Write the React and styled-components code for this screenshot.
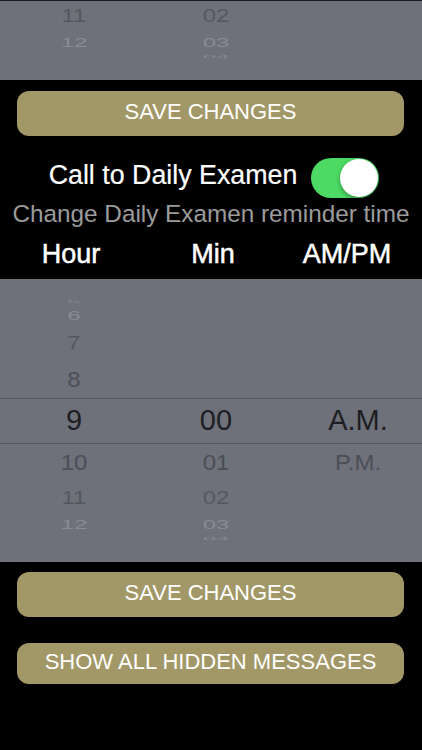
import React, { useState } from "react"
import styled, { createGlobalStyle } from "styled-components"

const GlobalStyle = createGlobalStyle`
  html, body {
    margin: 0;
    padding: 0;
    background: #000;
  }
  body {
    font-family: "Liberation Sans", Arial, sans-serif;
  }
`

// wheel geometry: radius and angle per row of the fake 3d drum
const RADIUS = 122
const STEP = (20 * Math.PI) / 180
const SLOTS = [-4, -3, -2, -1, 0, 1, 2, 3, 4]

const slotHeight = k => RADIUS * (Math.sin((k + 0.5) * STEP) - Math.sin((k - 0.5) * STEP))

const slotColor = k => {
  const d = Math.abs(k)
  if (d === 0) return "#1d1e23"
  if (d === 1) return "#4c4e56"
  if (d === 2) return "#55575f"
  if (d === 3) return "#8a8c94"
  return "#878991"
}

const Screen = styled.div`
  width: 422px;
  min-height: 750px;
  background: #000;
  display: flex;
  flex-direction: column;
  overflow: hidden;
`

const PickerClip = styled.div`
  height: 79px;
  border-top: 1px solid #1b1b1d;
  overflow: hidden;
  display: flex;
  flex-direction: column;
  justify-content: flex-end;
`

const Picker = styled.div`
  position: relative;
  flex-shrink: 0;
  height: 283px;
  background: #6e717a;
  display: grid;
  grid-template-columns: 142px 142px 142px;
  padding-left: 3px;
  overflow: hidden;
`

const SelectionBand = styled.div`
  position: absolute;
  left: 0;
  right: 0;
  top: 50%;
  height: 44px;
  transform: translateY(-50%);
  border-top: 1px solid #595b63;
  border-bottom: 1px solid #595b63;
  pointer-events: none;
`

const Wheel = styled.div`
  display: flex;
  flex-direction: column;
  justify-content: center;
  align-items: stretch;
`

const Slot = styled.div`
  display: flex;
  align-items: center;
  justify-content: center;
  overflow: visible;
  white-space: nowrap;
  line-height: 1;
  font-size: ${props => (props.selected ? "29px" : "24px")};
  color: ${props => props.tint};
`

const SlotText = styled.span`
  display: inline-block;
`

const GoldButton = styled.button`
  display: flex;
  align-items: center;
  justify-content: center;
  margin: ${props => props.gap}px 18px 0 17px;
  height: ${props => props.tall}px;
  border: 0;
  border-radius: 12px;
  background: #a29766;
  color: #fff;
  font-family: "Liberation Sans", Arial, sans-serif;
  font-size: 22px;
  padding: 0 0 3px;
  cursor: pointer;
`

const ToggleRow = styled.div`
  display: flex;
  align-items: center;
  justify-content: center;
  gap: 14px;
  margin-top: 22px;
  padding-left: 6px;
  height: 40px;
`

const ToggleLabel = styled.span`
  color: #fff;
  font-size: 26.8px;
  padding-bottom: 5px;
  -webkit-text-stroke: 0.2px #fff;
`

const Track = styled.button`
  width: 68px;
  height: 40px;
  border: 0;
  padding: 1px;
  border-radius: 20px;
  background: ${props => (props.on ? "#4cd964" : "#3a3a3c")};
  display: flex;
  justify-content: ${props => (props.on ? "flex-end" : "flex-start")};
  align-items: center;
  cursor: pointer;
`

const Knob = styled.span`
  width: 38px;
  height: 38px;
  border-radius: 50%;
  background: #fff;
  box-shadow: 0 2px 4px rgba(0, 0, 0, 0.35);
`

const Hint = styled.div`
  margin-top: 1px;
  text-align: center;
  color: #9b9b9b;
  font-size: 24.3px;
  line-height: 30px;
  white-space: nowrap;
`

const ColumnHeads = styled.div`
  display: grid;
  grid-template-columns: 142px 142px 126px;
  height: 50px;
  align-items: center;
`

const Head = styled.span`
  text-align: center;
  color: #fff;
  font-size: 27px;
  -webkit-text-stroke: 0.5px #fff;
`

const hours = [5, 6, 7, 8, 9, 10, 11, 12, null]
const minutes = [null, null, null, null, "00", "01", "02", "03", "04"]
const meridiem = [null, null, null, null, "A.M.", "P.M.", null, null, null]

// from: first slot whose text is drawn (rows above it are clipped away anyway)
const WheelColumn = ({ values, from }) => (
  <Wheel>
    {SLOTS.map((k, i) => {
      const value = k >= from ? values[i] : null
      return (
        <Slot key={k} selected={k === 0} tint={slotColor(k)} style={{ height: slotHeight(k) }}>
          {value !== null && (
            <SlotText style={{ transform: `scaleY(${Math.cos(k * STEP).toFixed(3)})` }}>{value}</SlotText>
          )}
        </Slot>
      )
    })}
  </Wheel>
)

const TimePicker = ({ from = -4 }) => (
  <Picker>
    <WheelColumn values={hours} from={from} />
    <WheelColumn values={minutes} from={from} />
    <WheelColumn values={meridiem} from={from} />
    <SelectionBand />
  </Picker>
)

const App = () => {
  const [enabled, setEnabled] = useState(true)

  return (
    <Screen>
      <GlobalStyle />
      <PickerClip>
        <TimePicker from={2} />
      </PickerClip>
      <GoldButton gap={11} tall={45}>SAVE CHANGES</GoldButton>
      <ToggleRow>
        <ToggleLabel>Call to Daily Examen</ToggleLabel>
        <Track on={enabled ? 1 : 0} onClick={() => setEnabled(!enabled)} aria-label="toggle">
          <Knob />
        </Track>
      </ToggleRow>
      <Hint>Change Daily Examen reminder time</Hint>
      <ColumnHeads>
        <Head>Hour</Head>
        <Head>Min</Head>
        <Head>AM/PM</Head>
      </ColumnHeads>
      <TimePicker />
      <GoldButton gap={10} tall={45}>SAVE CHANGES</GoldButton>
      <GoldButton gap={26} tall={41}>SHOW ALL HIDDEN MESSAGES</GoldButton>
    </Screen>
  )
}

export default App
